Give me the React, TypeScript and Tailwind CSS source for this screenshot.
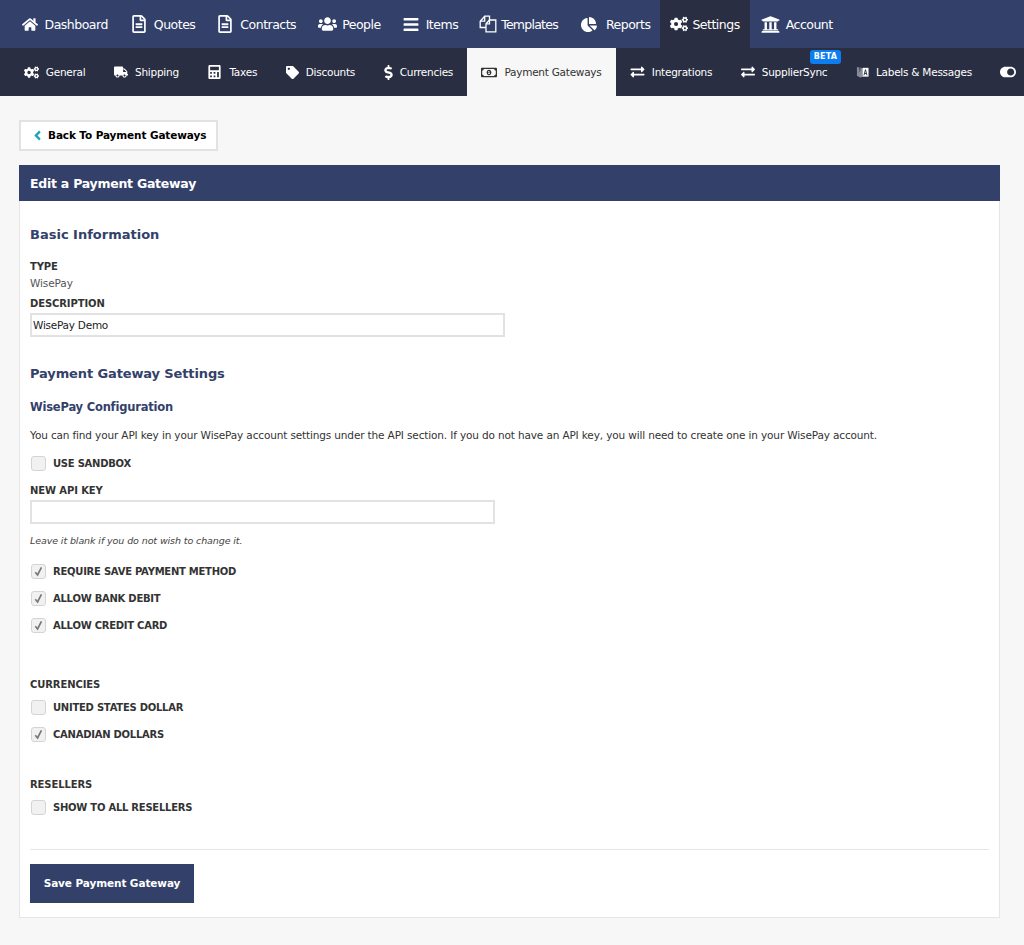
import type { IconType } from "react-icons";
import {
  FaAngleLeft,
  FaCalculator,
  FaChartPie,
  FaCogs,
  FaDollarSign,
  FaExchangeAlt,
  FaHome,
  FaBars,
  FaRegFileAlt,
  FaRegMoneyBillAlt,
  FaTag,
  FaToggleOn,
  FaTruck,
  FaUniversity,
  FaUsers,
} from "react-icons/fa";

const FONT = "font-['DejaVu_Sans',sans-serif]";
const LABEL_CLASS =
  "block text-[10px] leading-[14px] font-bold tracking-[-0.1px] text-[#333]";

function FilesIcon({ className }: { className?: string }) {
  return (
    <svg viewBox="0 0 18 18" className={className} fill="none" stroke="currentColor" strokeWidth="1.3">
      <path d="M7 12.5H1.2V6.2L5.7 1.2H10.5V5" />
      <path d="M5.7 1.2V6.2H1.2" />
      <path d="M7 16.8V8.8L10.5 5H16.8V16.8Z" />
      <path d="M10.5 5V8.8H7" />
    </svg>
  );
}

function LabelsIcon({ className }: { className?: string }) {
  return (
    <svg viewBox="0 0 14 14" className={className}>
      <path d="M1 1.5 7 3v9.5L4.5 13 1 11Z" fill="#8a8d99" />
      <path d="M7 2.5h6.5v9.5H7Z" fill="#fff" />
      <path d="M8.6 10.5 10.2 4.5l1.6 6M9.2 8.6h2" fill="none" stroke="#292e42" strokeWidth="1" />
      <path d="M3 3.5h2M4 3.5v1M2.8 7 5 5" fill="none" stroke="#292e42" strokeWidth="0.8" />
    </svg>
  );
}

const mainNav: {
  label: string;
  icon: IconType | typeof FilesIcon;
  iconClass: string;
  extra?: string;
}[] = [
  { label: "Dashboard", icon: FaHome, iconClass: "h-[17px] w-[16px]", extra: "mr-[2px] gap-[7px]" },
  { label: "Quotes", icon: FaRegFileAlt, iconClass: "h-[18px] w-[16px]", extra: "gap-[7px]" },
  { label: "Contracts", icon: FaRegFileAlt, iconClass: "ml-[1px] h-[18px] w-[16px]", extra: "gap-[7px]" },
  { label: "People", icon: FaUsers, iconClass: "ml-[1px] h-[20px] w-[19px]", extra: "gap-[5px]" },
  { label: "Items", icon: FaBars, iconClass: "ml-[1px] h-[17px] w-[16px]", extra: "gap-[7px]" },
  { label: "Templates", icon: FilesIcon, iconClass: "h-[18px] w-[18px]", extra: "gap-[4px] tracking-[-0.75px]" },
  { label: "Reports", icon: FaChartPie, iconClass: "ml-[2px] h-[17px] w-[16px]", extra: "-mr-px gap-[9px]" },
  { label: "Settings", icon: FaCogs, iconClass: "h-[18px] w-[18px]", extra: "gap-[4px] bg-[#292e42]" },
  { label: "Account", icon: FaUniversity, iconClass: "h-[19px] w-[19px]", extra: "gap-[6px]" },
];

const subNav: {
  label: string;
  icon: IconType | typeof LabelsIcon;
  iconClass: string;
  active?: boolean;
  beta?: boolean;
}[] = [
  { label: "General", icon: FaCogs, iconClass: "h-[15px] w-[15px]" },
  { label: "Shipping", icon: FaTruck, iconClass: "h-[14px] w-[14px]" },
  { label: "Taxes", icon: FaCalculator, iconClass: "h-[14px] w-[15px]" },
  { label: "Discounts", icon: FaTag, iconClass: "h-[13px] w-[13px]" },
  { label: "Currencies", icon: FaDollarSign, iconClass: "h-[15px] w-[9px]" },
  { label: "Payment Gateways", icon: FaRegMoneyBillAlt, iconClass: "h-[15px] w-[16px]", active: true },
  { label: "Integrations", icon: FaExchangeAlt, iconClass: "h-[14px] w-[15px]" },
  { label: "SupplierSync", icon: FaExchangeAlt, iconClass: "h-[14px] w-[14px]", beta: true },
  { label: "Labels & Messages", icon: LabelsIcon, iconClass: "h-[14px] w-[13px]" },
];

function Checkbox({ label, checked = false }: { label: string; checked?: boolean }) {
  return (
    <label className="flex h-[17px] items-center">
      <span className="ml-px flex h-[15px] w-[15px] items-center justify-center rounded-[3px] border border-[#d4d4d4] bg-[#f1f1f1]">
        {checked ? (
          <svg viewBox="0 0 12 12" className="h-[11px] w-[11px]">
            <path d="M2.5 6.8 5 9.8 9.2 1.5" fill="none" stroke="#777" strokeWidth="1.8" />
          </svg>
        ) : null}
      </span>
      <span className="ml-[7px] block text-[10px] leading-[14px] font-bold tracking-[-0.25px] text-[#333]">
        {label}
      </span>
    </label>
  );
}

export default function App() {
  return (
    <div className={`min-h-[945px] overflow-hidden bg-[#f7f7f7] ${FONT}`}>
      <nav className="flex h-12 bg-[#33416a] pl-[11px]">
        {mainNav.map(({ label, icon: Icon, iconClass, extra }) => (
          <a
            key={label}
            className={`flex items-center px-[10.5px] text-[12.5px] tracking-[-0.5px] whitespace-nowrap text-white ${extra}`}
          >
            <Icon className={iconClass} />
            <span className="mt-[2px]">{label}</span>
          </a>
        ))}
      </nav>

      <nav className="flex h-12 overflow-hidden bg-[#292e42] pl-[9.5px]">
        {subNav.map(({ label, icon: Icon, iconClass, active, beta }) => (
          <a
            key={label}
            className={`relative flex shrink-0 items-center gap-[7px] text-[10.5px] tracking-[-0.25px] whitespace-nowrap ${
              active ? "bg-[#f7f7f7] px-[14px] text-[#333]" : "px-[14.3px] text-white"
            }`}
          >
            <Icon className={iconClass} />
            <span className="mt-[2px]">{label}</span>
            {beta ? (
              <span className="absolute top-[2px] right-[1px] rounded-[3px] bg-[#0d7ef0] px-[3.5px] text-[8px] leading-[14px] font-bold tracking-[0.2px] text-white">
                BETA
              </span>
            ) : null}
          </a>
        ))}
        <span className="flex shrink-0 items-center pl-[14.3px] text-white">
          <FaToggleOn className="h-[16px] w-[16px]" />
        </span>
      </nav>

      <main className="px-[19px] pt-6 pb-[27px]">
        <a className="flex h-[31px] w-[199px] items-center border-2 border-[#e2e2e2] bg-white pl-3 text-[10.5px] font-bold tracking-[-0.12px] whitespace-nowrap text-black">
          <FaAngleLeft className="mr-[6px] h-[15px] w-[9px] text-[#1aa5b8]" />
          Back To Payment Gateways
        </a>

        <section className="mt-[14px] w-[981px] border border-[#e6e6e6] bg-white">
          <h1 className="-m-px flex h-9 items-center bg-[#33416a] pt-[2px] pl-[11px] text-[12.5px] font-bold tracking-[-0.25px] text-white">
            Edit a Payment Gateway
          </h1>

          <div className="px-[10px] pt-[26px] pb-[14px]">
            <h2 className="text-[13px] leading-[18px] font-bold text-[#33416a]">
              Basic Information
            </h2>
            <span className={`mt-[16px] ${LABEL_CLASS}`}>TYPE</span>
            <p className="mt-[1px] text-[10.5px] leading-[16px] tracking-[-0.1px] text-[#555]">
              WisePay
            </p>
            <label className={`mt-[6px] ${LABEL_CLASS}`}>DESCRIPTION</label>
            <input
              readOnly
              value="WisePay Demo"
              className="mt-[2px] block h-6 w-[475px] border-2 border-[#e2e2e2] px-[1px] text-[10.5px] tracking-[-0.25px] text-[#222]"
            />

            <h2 className="mt-[28px] text-[13px] leading-[18px] tracking-[-0.12px] font-bold text-[#33416a]">
              Payment Gateway Settings
            </h2>
            <h3 className="mt-[16px] text-[11.5px] leading-[16px] tracking-[-0.2px] font-bold text-[#33416a]">
              WisePay Configuration
            </h3>
            <p className="mt-[12px] text-[10.5px] leading-[16px] tracking-[-0.14px] text-[#333]">
              You can find your API key in your WisePay account settings under the API
              section. If you do not have an API key, you will need to create one in your
              WisePay account.
            </p>

            <div className="mt-[12px]">
              <Checkbox label="USE SANDBOX" />
            </div>
            <label className={`mt-[12px] ${LABEL_CLASS}`}>NEW API KEY</label>
            <input className="mt-[2px] block h-6 w-[465px] border-2 border-[#e2e2e2]" />
            <p className="mt-[9px] text-[9.5px] leading-[16px] tracking-[-0.1px] text-[#444] italic">
              Leave it blank if you do not wish to change it.
            </p>

            <div className="mt-[14px] flex flex-col gap-[10px]">
              <Checkbox label="REQUIRE SAVE PAYMENT METHOD" checked />
              <Checkbox label="ALLOW BANK DEBIT" checked />
              <Checkbox label="ALLOW CREDIT CARD" checked />
            </div>

            <span className={`mt-[44px] ${LABEL_CLASS}`}>CURRENCIES</span>
            <div className="mt-[7px] flex flex-col gap-[10px]">
              <Checkbox label="UNITED STATES DOLLAR" />
              <Checkbox label="CANADIAN DOLLARS" checked />
            </div>

            <span className={`mt-[35px] ${LABEL_CLASS}`}>RESELLERS</span>
            <div className="mt-[7px]">
              <Checkbox label="SHOW TO ALL RESELLERS" />
            </div>

            <hr className="mt-[33px] border-[#e6e6e6]" />
            <button className="mt-[14px] block h-[39px] w-[164px] bg-[#33416a] text-[10.5px] font-bold tracking-[-0.1px] text-white">
              Save Payment Gateway
            </button>
          </div>
        </section>
      </main>
    </div>
  );
}
